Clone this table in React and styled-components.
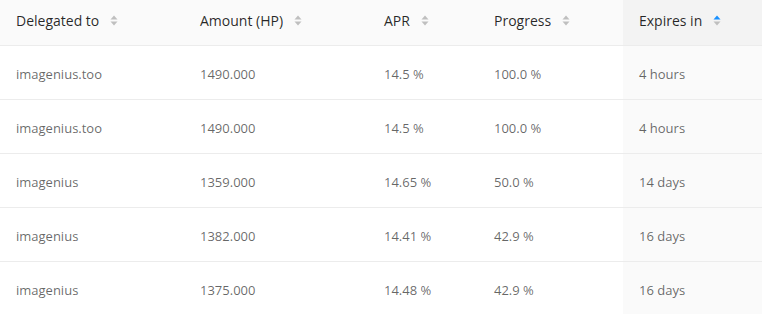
import React from "react";
import styled, { createGlobalStyle } from "styled-components";

const Global = createGlobalStyle`
  html, body { margin: 0; padding: 0; background: #fff; }
  body { font-family: "Open Sans", "Noto Sans", sans-serif; }
`;

const Table = styled.table`
  width: 762px;
  border-collapse: collapse;
  table-layout: fixed;
`;

const Th = styled.th`
  padding: 10px 16px 14px;
  line-height: 21px;
  text-align: left;
  font-size: 14px;
  font-weight: 400;
  color: rgba(0, 0, 0, 0.85);
  background: ${(p) => (p.$sorted ? "#f3f3f3" : "#fafafa")};
  border-bottom: 1px solid #ececec;
  white-space: nowrap;
`;

const Td = styled.td`
  padding: 18px 16px 14px;
  line-height: 21px;
  font-size: 13px;
  color: rgba(0, 0, 0, 0.6);
  background: ${(p) => (p.$sorted ? "#fafafa" : "#fff")};
  border-bottom: 1px solid #ececec;
  white-space: nowrap;
`;

const HeadInner = styled.div`
  display: flex;
  align-items: center;
  gap: 11px;
`;

const Sorter = styled.span`
  display: inline-flex;
  flex-direction: column;
  gap: 1px;
`;

function Caret({ up, active }) {
  return (
    <svg width="8" height="5" viewBox="0 0 8 5" style={{ display: "block" }}>
      <path
        d={up ? "M4 0.5 L7.5 4.5 L0.5 4.5 Z" : "M0.5 0.5 L7.5 0.5 L4 4.5 Z"}
        fill={active ? "#1890ff" : "#bfbfbf"}
      />
    </svg>
  );
}

const columns = [
  { key: "to", title: "Delegated to", width: 184 },
  { key: "amount", title: "Amount (HP)", width: 184 },
  { key: "apr", title: "APR", width: 110 },
  { key: "progress", title: "Progress", width: 145 },
  { key: "expires", title: "Expires in", width: 139, sorted: true },
];

const rows = [
  ["imagenius.too", "1490.000", "14.5 %", "100.0 %", "4 hours"],
  ["imagenius.too", "1490.000", "14.5 %", "100.0 %", "4 hours"],
  ["imagenius", "1359.000", "14.65 %", "50.0 %", "14 days"],
  ["imagenius", "1382.000", "14.41 %", "42.9 %", "16 days"],
  ["imagenius", "1375.000", "14.48 %", "42.9 %", "16 days"],
];

export default function App() {
  return (
    <>
      <Global />
      <Table>
        <colgroup>
          {columns.map((c) => (
            <col key={c.key} style={{ width: c.width }} />
          ))}
        </colgroup>
        <thead>
          <tr>
            {columns.map((c) => (
              <Th key={c.key} $sorted={c.sorted}>
                <HeadInner>
                  <span>{c.title}</span>
                  <Sorter>
                    <Caret up active={c.sorted} />
                    <Caret />
                  </Sorter>
                </HeadInner>
              </Th>
            ))}
          </tr>
        </thead>
        <tbody>
          {rows.map((r, i) => (
            <tr key={i}>
              {r.map((v, j) => (
                <Td key={j} $sorted={columns[j].sorted}>
                  {v}
                </Td>
              ))}
            </tr>
          ))}
        </tbody>
      </Table>
    </>
  );
}
